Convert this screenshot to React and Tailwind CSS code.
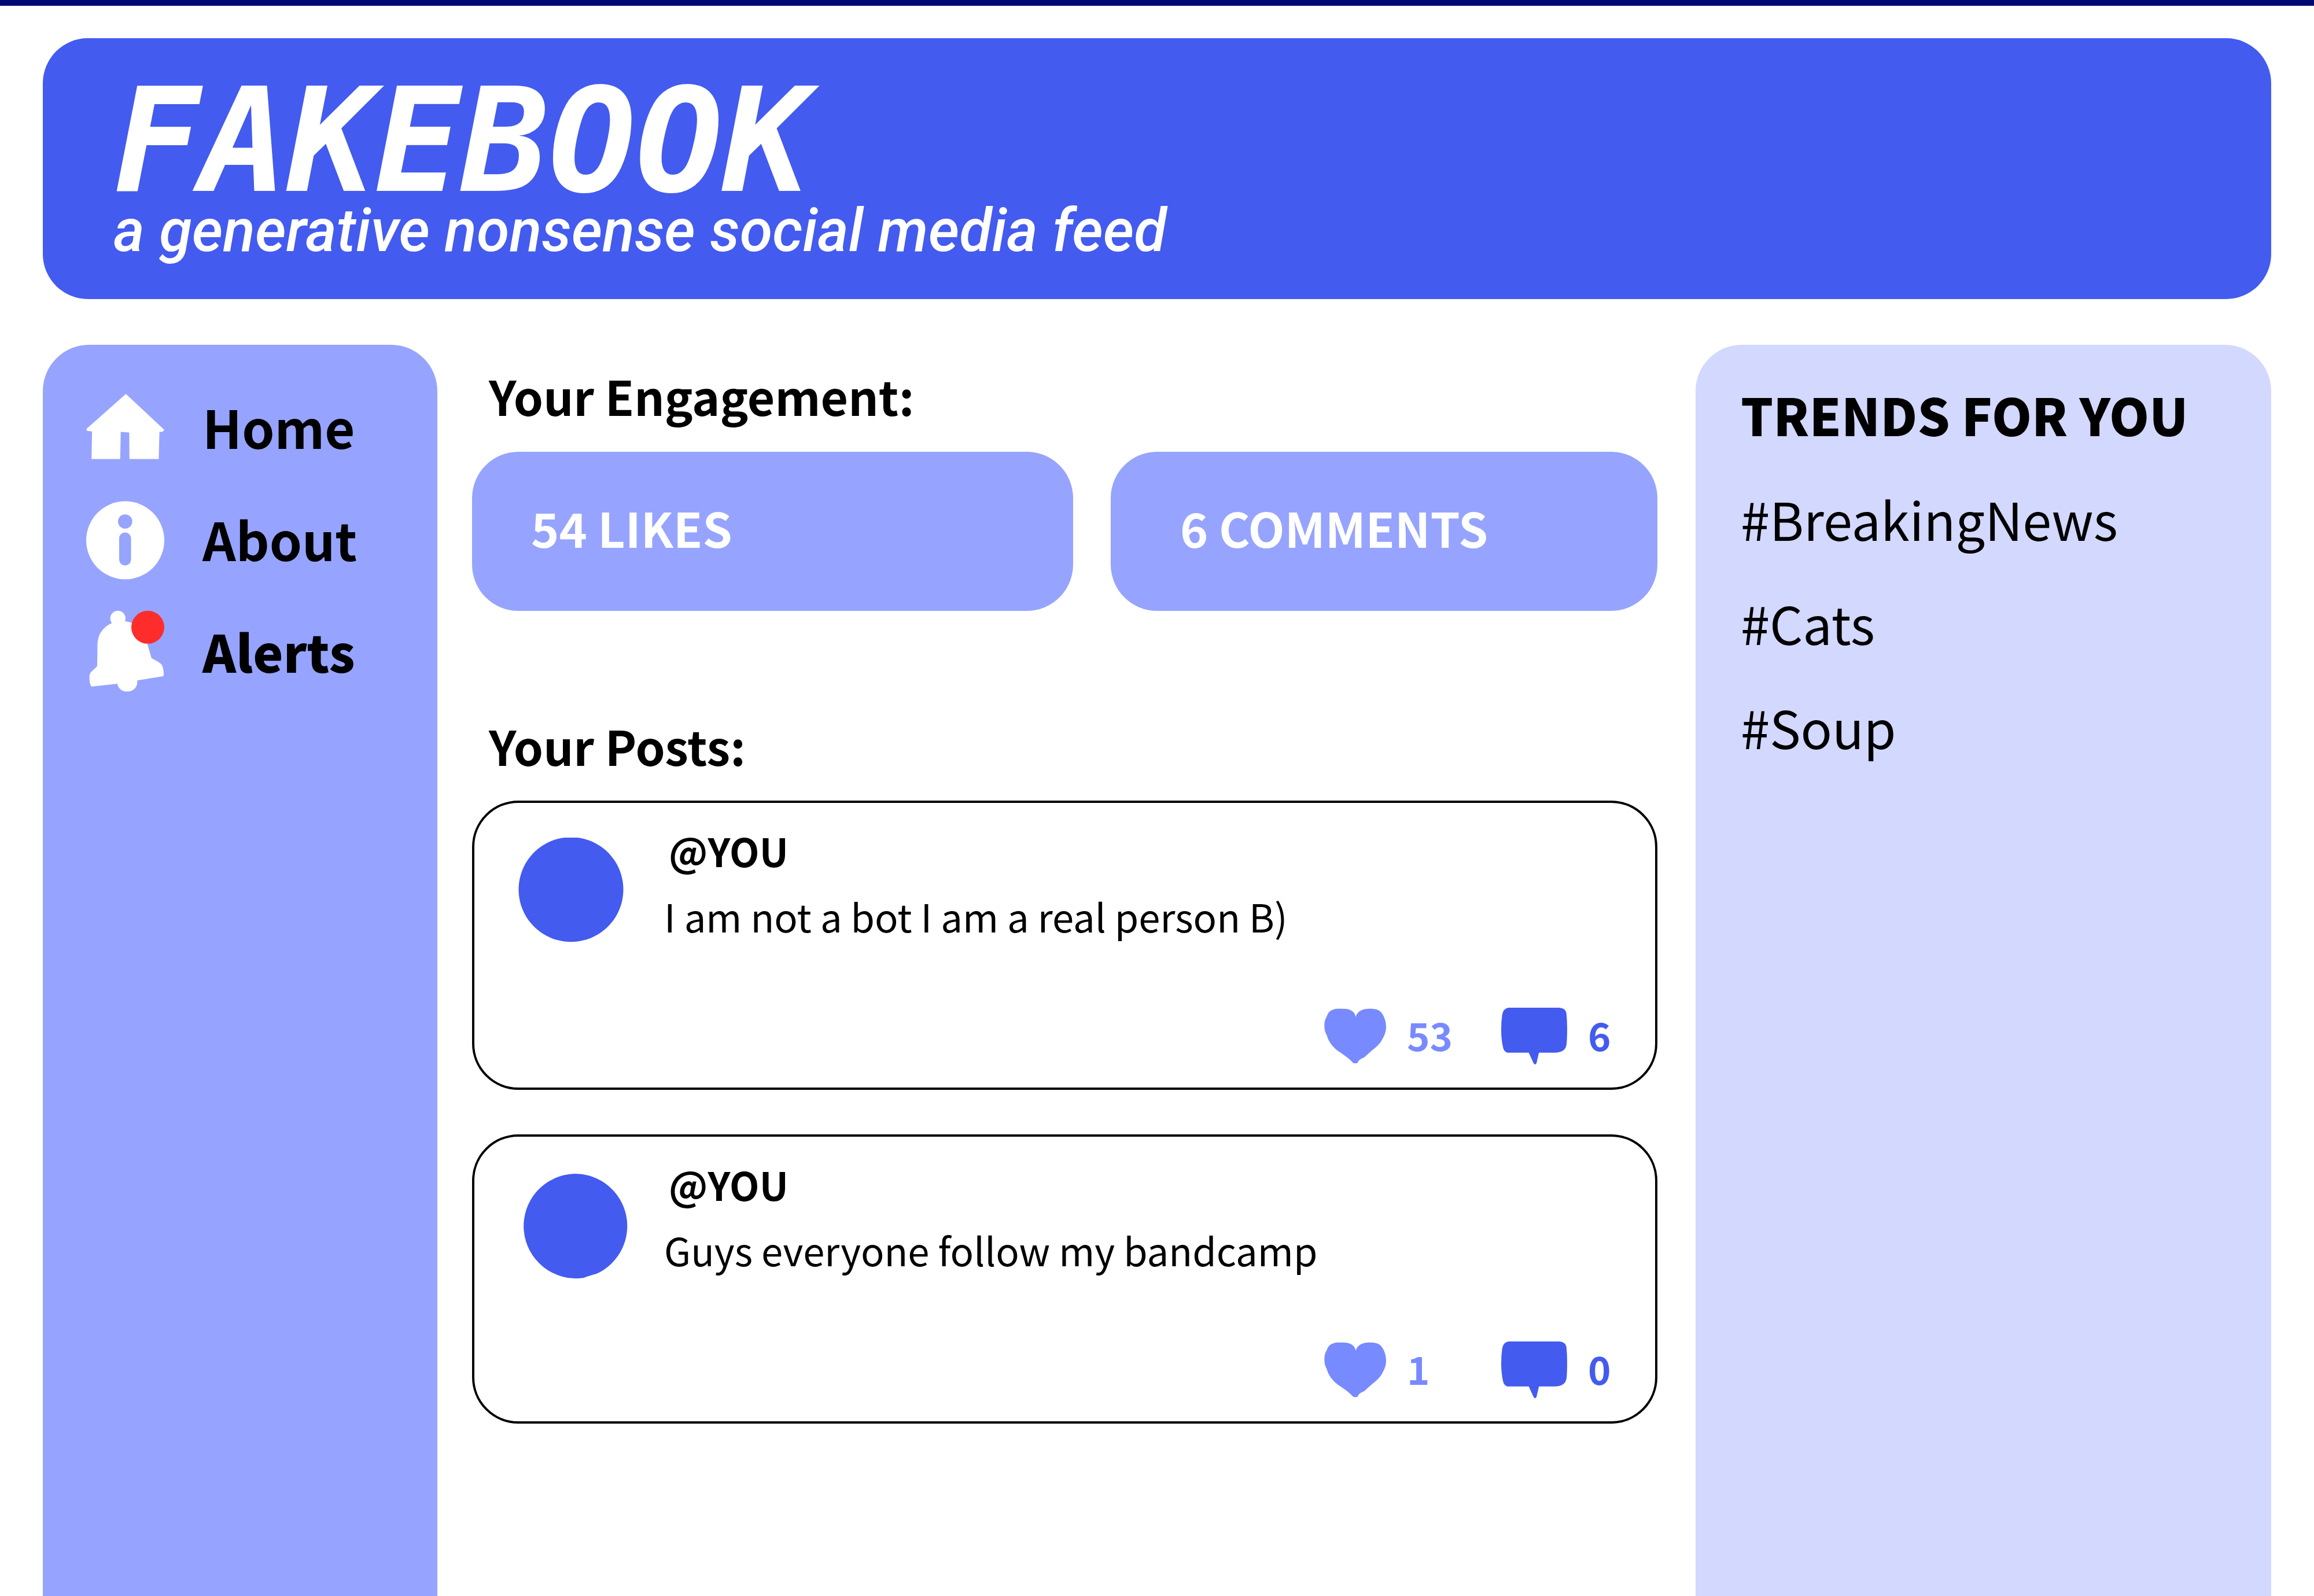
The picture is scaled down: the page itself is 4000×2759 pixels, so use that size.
import React from "react";

function HomeIcon() {
  return (
    <svg viewBox="0 0 140 144" className="w-[140px] h-36 shrink-0 overflow-visible" fill="white" aria-hidden="true">
      <path d="M71.6 18 L138 80 L135 83.5 H129.6 L128.4 130.5 H77.8 L77.4 84.8 L62.7 83.5 L61.8 130.5 H12.2 L13.1 82.7 L5.1 82 L2.8 79 Z" />
    </svg>
  );
}

function InfoIcon() {
  return (
    <svg viewBox="0 0 140 144" className="w-[140px] h-36 shrink-0 overflow-visible" aria-hidden="true">
      <circle cx="70.5" cy="77" r="67.5" fill="white" />
      <circle cx="70.3" cy="44.5" r="12.3" fill="#96a4ff" />
      <rect x="60" y="63.5" width="20.5" height="57" rx="10" fill="#96a4ff" />
    </svg>
  );
}

function BellIcon() {
  return (
    <svg viewBox="0 0 140 144" className="w-[140px] h-36 shrink-0 overflow-visible" aria-hidden="true">
      <g fill="white">
        <circle cx="57.8" cy="18" r="13.2" />
        <path d="M48 25.7 C31 33 22.5 47 22.5 63.7 L22 100.5 C17 107 8.8 110 8.6 118 C8.4 124 9 130 11 134.5 Q11.5 136 13.5 135.7 L56.9 131 C58 138.5 64 144.5 74 144.5 C85 144.5 92.5 136 91.2 125.3 L135.9 118 Q137 117.5 137 115 C137 109 136 101 132.8 97.2 C128 92.5 121 90 115.8 86.6 L108.6 61.7 L82 26 Q77 23.5 70 23 Z" />
      </g>
      <circle cx="109.5" cy="33.3" r="28.5" fill="#ff2c2c" />
    </svg>
  );
}

function HeartIcon() {
  return (
    <svg viewBox="0 0 107 98" className="w-[107px] h-[98px] shrink-0" fill="currentColor" aria-hidden="true">
      <path d="M54.3 16.3 C57 6 66 1.7 78.3 1.7 C88 1.7 94 3 98.5 8 C104 15 107 24 107 33 C107 42 104 49 98.5 58 C94 65 88 69.5 81.6 74.7 L69 86 Q60 89 57.7 95.3 Q53.7 97 49.7 95.3 Q44 88 22.7 74 C13 66 7.5 58 4.6 48 C1.5 42 0.4 38 0.4 31.3 C0.4 24 1.5 20 4.6 14.7 C7 8 10 5.5 14.3 3.7 C18 2 22 1.7 27 1.7 C36 1.7 40 2 44 3.5 C51 6.5 54 11 54.3 16.3 Z" />
    </svg>
  );
}

function CommentIcon() {
  return (
    <svg viewBox="0 0 114 98" className="w-[114px] h-[98px] shrink-0" fill="currentColor" aria-hidden="true">
      <path d="M12.6 0 H99.7 Q111 0.5 112.6 9 Q114 22 114 35 Q114 52 113 63 Q112 70 108.2 73 Q104 77 93.4 77.7 H65.2 L61 96 Q58.5 100 56 96 L47.6 77.7 H10.5 Q4.5 76 3 68 Q0 54 0 38 Q0 24 1.7 12 Q3.5 1.5 12.6 0 Z" />
    </svg>
  );
}

const nav = [
  { label: "Home", icon: HomeIcon, style: "text-[90px] font-semibold" },
  { label: "About", icon: InfoIcon, style: "text-[90px] font-semibold" },
  { label: "Alerts", icon: BellIcon, style: "text-[88px] font-black" },
];

const trends = ["#BreakingNews", "#Cats", "#Soup"];

const posts = [
  {
    text: "I am not a bot I am a real person B)",
    likes: 53,
    comments: 6,
    avatar: "M79 0 H103 A90.5 90.5 0 1 1 79 0 Z",
  },
  {
    text: "Guys everyone follow my bandcamp",
    likes: 1,
    comments: 0,
    avatar: "M98 4 A90.5 90.5 0 0 1 135 177 Q123 180 113 184 A90.5 90.5 0 1 1 98 4 Z",
  },
];

function Post({ text, likes, comments, avatar }) {
  return (
    <article className="rounded-[80px] border-4 border-black px-[76px] pt-[42px] pb-10 text-[67px] leading-[80px]">
      <div className="flex gap-15">
        <svg viewBox="0 0 192 192" className="mt-[18px] w-48 h-48 shrink-0" fill="#435bef" aria-hidden="true">
          <path d={avatar} />
        </svg>
        <div>
          <h3 className="pl-2 font-bold">@YOU</h3>
          <p className="mt-[33px]">{text}</p>
        </div>
      </div>
      <div className="mt-[102px] flex justify-end font-bold">
        <button type="button" aria-label={`${likes} likes`} className="flex w-[306px] items-center gap-9 text-[#788aff]">
          <HeartIcon />
          <span className="pb-1.5">{likes}</span>
        </button>
        <button type="button" aria-label={`${comments} comments`} className="flex w-[190px] items-center gap-9 text-[#435bef]">
          <CommentIcon />
          <span className="pb-1.5">{comments}</span>
        </button>
      </div>
    </article>
  );
}

export default function App() {
  return (
    <div className="flex min-h-screen flex-col border-t-10 border-[#000871] bg-white px-[74px] pt-14 font-['Noto_Sans_CJK_SC',sans-serif] text-black">
      <header className="rounded-[78px] bg-[#435bef] px-[122px] pt-[78px] pb-[63px] italic text-white">
        <h1 className="font-['DejaVu_Sans_Mono',monospace] text-[250px] leading-[200px] font-bold">FAKEBOOK</h1>
        <p className="font-['Roboto',sans-serif] text-[103px] leading-[110px] font-medium">a generative nonsense social media feed</p>
      </header>

      <div className="mt-[79px] grid flex-1 grid-cols-[682fr_2055fr_995fr] gap-x-15">
        <nav className="rounded-t-[80px] bg-[#96a4ff] px-[72px] pt-[67px]">
          <ul className="flex flex-col gap-[50px]">
            {nav.map(({ label, icon: Icon, style }) => (
              <li key={label}>
                <a href="#" className="flex items-center gap-16">
                  <Icon />
                  <span className={`pt-1 leading-[100px] ${style}`}>{label}</span>
                </a>
              </li>
            ))}
          </ul>
        </nav>

        <main className="pt-[38px] pr-1.5">
          <h2 className="pl-[29px] text-[82px] leading-[100px] font-semibold">Your Engagement:</h2>
          <div className="mt-[47px] grid grid-cols-[1039fr_945fr] gap-[65px] text-[82px] leading-[100px] font-semibold text-white">
            <p className="rounded-[80px] bg-[#96a4ff] pt-[81px] pr-20 pb-[94px] pl-[102px]">54 LIKES</p>
            <p className="rounded-[80px] bg-[#96a4ff] pt-[81px] pr-20 pb-[94px] pl-[120px]">6 COMMENTS</p>
          </div>

          <h2 className="mt-[183px] pl-[29px] text-[82px] leading-[100px] font-semibold">Your Posts:</h2>
          <div className="mt-[45px] flex flex-col gap-[77px]">
            {posts.map((post) => (
              <Post key={post.text} {...post} />
            ))}
          </div>
        </main>

        <aside className="rounded-t-[80px] bg-[#d3d8ff] px-[78px] pt-[70px] leading-[100px]">
          <h2 className="text-[88px] font-black">TRENDS FOR YOU</h2>
          <ul className="mt-20 flex flex-col gap-20 text-[90px]">
            {trends.map((tag) => (
              <li key={tag}>
                <a href="#">{tag}</a>
              </li>
            ))}
          </ul>
        </aside>
      </div>
    </div>
  );
}
